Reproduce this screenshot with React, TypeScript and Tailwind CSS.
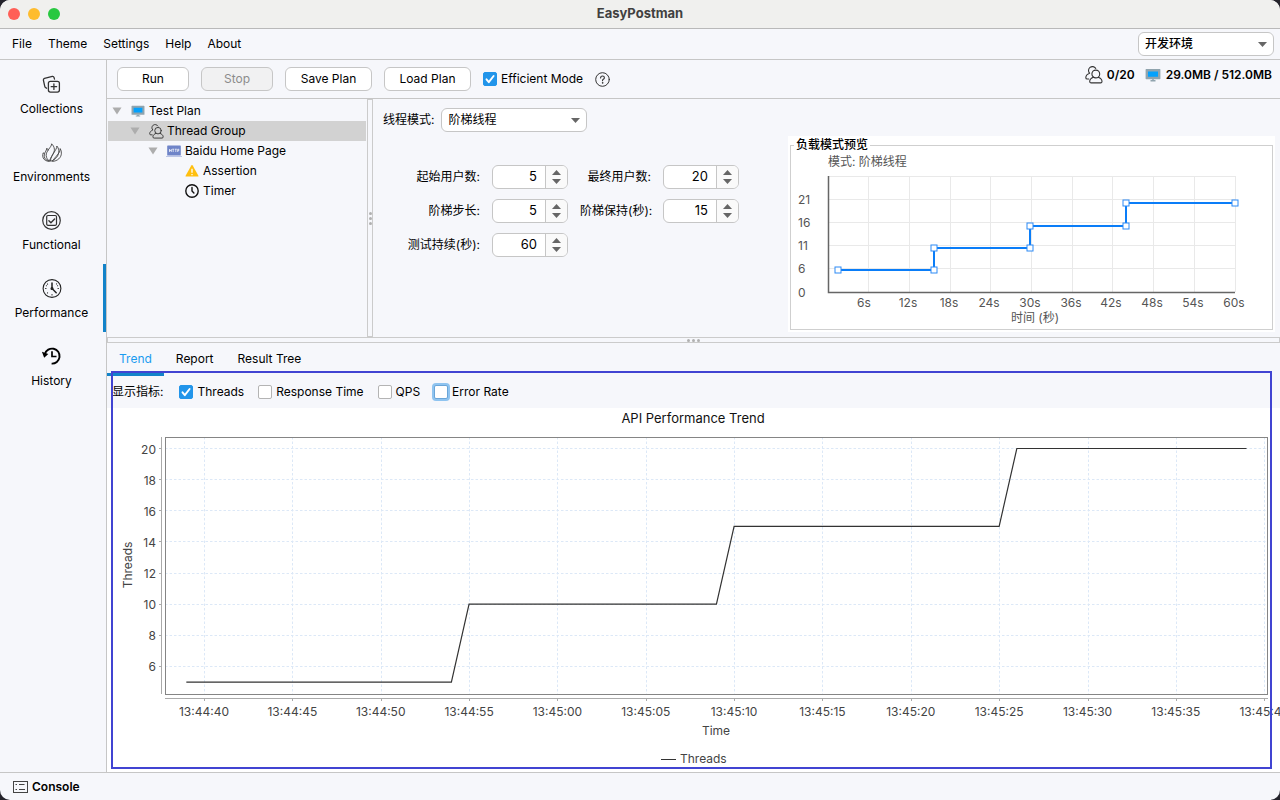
import { useState } from "react";
import type { ReactNode } from "react";
import clsx from "clsx";

const CollectionsIcon = () => (
  <svg width="20" height="20" viewBox="0 0 20 20" fill="none" stroke="#333" strokeWidth="1.3" strokeLinecap="round" strokeLinejoin="round">
    <path d="M4.6 13.2 3.4 12.4Q2.9 12 2.7 11.2L1.4 5.1Q1.1 3.7 2.5 3.3L10.3 1.4Q11.6 1.1 12 2.4L12.5 4.1" />
    <rect x="6.4" y="6.3" width="11" height="10.8" rx="2" />
    <path d="M11.9 9v5.4M9.2 11.7h5.4" />
  </svg>
);

const EnvironmentsIcon = () => (
  <svg width="20" height="20" viewBox="0 0 20 20" fill="none" stroke="#444" strokeWidth="0.9" strokeLinejoin="round">
    <path d="M9.6.8C9.800 4 3.800 7.800 4.200 12.600 4.400 15 5.600 16.800 7.400 18.200 8.200 14.500 12.800 10 12.400 6.200 12.200 4 11 2 9.600.8Z" />
    <path d="M14.800 3C15.200 7 8.800 11.600 8.400 18.200 13.200 17.400 17.200 12.400 16.800 7.600 16.600 5.600 15.800 4 14.800 3Z" />
    <path d="M18.200 5.600C18.400 10 13 14 10.200 18.400 15.400 18.200 19.400 14.600 19.400 10.200 19.400 8.400 19 6.800 18.200 5.600Z" />
    <path d="M4.800 5.200C4.800 7.600 1.800 9.800 2.200 13.200 2.600 16 4.600 17.800 7.400 18.200M4.800 5.200Q5.800 6 6.200 7.600" />
    <path d="M1.200 9.800C.4 12 .4 14.600 2.200 16.400 3.600 17.800 5.400 18.200 7.400 18.200M1.200 9.800Q2 10.200 2.500 11" />
  </svg>
);

const FunctionalIcon = () => (
  <svg width="20" height="20" viewBox="0 0 20 20" fill="none" stroke="#333" strokeWidth="1.2" strokeLinecap="round" strokeLinejoin="round">
    <circle cx="9.500" cy="9.500" r="8.800" />
    <rect x="4.700" y="4.500" width="9.800" height="9.800" rx="1.200" />
    <path d="m6.900 9.800 2 2 3.700-3.700" strokeWidth="1.400" />
  </svg>
);

const PerformanceIcon = () => (
  <svg width="20" height="20" viewBox="0 0 20 20" fill="none" stroke="#222" strokeWidth="1.100" strokeLinecap="round">
    <circle cx="10" cy="9.500" r="8.900" />
    <path d="M10 3.900V9.500l4.200 4.200" strokeWidth="1.500" />
    <circle cx="10" cy="9.500" r="1" fill="#222" />
    <path d="M3.600 9.500h.4M16 9.500h.4M10 15.500v.4M5.500 5l.1.100M14.500 5l.1-.1M5.500 14l.1-.1M4.400 6.700h.1M15.500 6.700h.1" />
  </svg>
);

const HistoryIcon = () => (
  <svg width="20" height="20" viewBox="0 0 20 20" fill="none" stroke="#000" strokeWidth="1.900">
    <path d="M2.900 7A7.500 7.500 0 1 1 9.600 16.600" />
    <path d="M10 4.200v5.300h4.500" strokeWidth="1.700" />
    <path d="M-.2 4.600 6.300 6.900 2.200 10.700Z" fill="#000" stroke="none" />
  </svg>
);

const MonitorIcon = ({ size }: { size: number }) => (
  <svg width={size} height={size} viewBox="0 0 16 16">
    <path d="M1.200 2h13.600q.6 0 .6.600v9q0 .6-.6.600H1.200q-.6 0-.6-.6v-9q0-.6.600-.6Z" fill="#90a4ae" />
    <path d="M3 4.400h10v5.400H3z" fill="#03a1fd" />
    <path d="M7 12.200h2v1H7zM5.500 13h5v1.400h-5z" fill="#90a4ae" />
  </svg>
);

const UsersIcon = ({ size }: { size: number }) => (
  <svg width={size} height={size} viewBox="0 0 18 18" fill="none" stroke="#333" strokeWidth="1.100" strokeLinecap="round" strokeLinejoin="round">
    <circle cx="10.800" cy="8" r="3.900" />
    <path d="M8.400 11.200C6.200 12 4.700 13.500 4.700 15.400Q4.700 16.900 6.200 16.900H15.600Q17 16.900 17 15.400C17 13.500 15.400 12 13.200 11.200" />
    <path d="M10.700 2.400A3.900 3.900 0 1 0 4.600 7.200C2.400 8 .8 9.800 .8 11.700Q.8 13 2.200 13H3.800" />
  </svg>
);

const HttpIcon = () => (
  <svg width="16" height="14" viewBox="0 0 16 14">
    <rect x="1.200" y="1.500" width="13.600" height="10" rx=".6" fill="#6f84c8" />
    <path d="M0 12h16v.8H0z" fill="#a9b5e0" />
    <path d="M3.500 5v3M5.300 5v3M3.500 6.500h1.800M6.200 5.200h2M7.200 5.200V8M8.800 5.200h2M9.800 5.200V8M11.700 8V5.200h1.100v1.500h-1.100" fill="none" stroke="#fff" strokeWidth=".7" />
  </svg>
);

const WarningIcon = () => (
  <svg width="14" height="14" viewBox="0 0 14 14">
    <path d="M6.300 1.500q.7-1 1.400 0l5.700 10.200q.4.900-.6.900H1.200q-1 0-.6-.9Z" fill="#ffbf0f" />
    <path d="M7 4.800v4M7 9.900v1.400" stroke="#fff" strokeWidth="1.300" />
  </svg>
);

const TimerIcon = () => (
  <svg width="14" height="14" viewBox="0 0 14 14" fill="none" stroke="#111" strokeWidth="1.400" strokeLinecap="round">
    <circle cx="7" cy="7" r="6.200" />
    <path d="M7 3.500V7l1.900 1.900" />
  </svg>
);

const ConsoleIcon = () => (
  <svg width="16" height="14" viewBox="0 0 16 14" fill="none" stroke="#444" strokeWidth="1">
    <rect x="1.500" y="1.500" width="14" height="11" />
    <path d="M3.500 4.500h1.500M3.500 9.500h1.500M7 4.500h5.500M7 9.500h6" strokeWidth="1.200" />
  </svg>
);

const navItems = [
  { label: "Collections", icon: <CollectionsIcon /> },
  { label: "Environments", icon: <EnvironmentsIcon /> },
  { label: "Functional", icon: <FunctionalIcon /> },
  { label: "Performance", icon: <PerformanceIcon /> },
  { label: "History", icon: <HistoryIcon /> },
];

const treeRows = [
  { label: "Test Plan", icon: <MonitorIcon size={14} />, indent: "pl-1", open: true },
  { label: "Thread Group", icon: <UsersIcon size={15} />, indent: "pl-[22px]", open: true, selected: true },
  { label: "Baidu Home Page", icon: <HttpIcon />, indent: "pl-[40px]", open: true },
  { label: "Assertion", icon: <WarningIcon />, indent: "pl-[58px]" },
  { label: "Timer", icon: <TimerIcon />, indent: "pl-[58px]" },
];

const PushButton = ({ children, wide, disabled }: { children: ReactNode; wide?: boolean; disabled?: boolean }) => (
  <button
    type="button"
    disabled={disabled}
    className={clsx(
      "h-6 rounded-md border border-[#c6c6c6] text-center",
      wide ? "w-[87px]" : "w-[72px]",
      disabled ? "bg-[#f1f1f2] text-[#8c8c8c]" : "bg-white"
    )}
  >
    {children}
  </button>
);

interface CheckProps {
  label: string;
  defaultChecked?: boolean;
  focused?: boolean;
}

const Check = ({ label, defaultChecked, focused }: CheckProps) => (
  <label className="flex items-center gap-1 whitespace-nowrap">
    <span className="relative flex size-[14px]">
      <input
        type="checkbox"
        defaultChecked={defaultChecked}
        className={clsx(
          "peer size-[14px] appearance-none rounded-[2px] border bg-white checked:border-[#2295ea] checked:bg-[#2295ea]",
          focused ? "border-[#6aa5d8] ring-2 ring-[#8fc4f0]" : "border-[#b4b4b4]"
        )}
      />
      <svg className="pointer-events-none absolute inset-0 hidden peer-checked:block" viewBox="0 0 14 14" fill="none" stroke="#fff" strokeWidth="1.900" strokeLinecap="round" strokeLinejoin="round">
        <path d="m3.500 7.300 2.300 2.900 4.800-6.200" />
      </svg>
    </span>
    {label}
  </label>
);

const Combo = ({ id, value, className }: { id: string; value: string; className: string }) => (
  <span className={clsx("relative block h-6", className)}>
    <select id={id} aria-label={value} className="h-6 w-full appearance-none rounded-md border border-[#c6c6c6] bg-white pl-1.5 pr-6">
      <option>{value}</option>
    </select>
    <svg className="pointer-events-none absolute right-[7px] top-[10px]" width="9" height="5" viewBox="0 0 9 5">
      <path d="M0 0h9L4.500 5z" fill="#666" />
    </svg>
  </span>
);

const Spinner = ({ id, value }: { id: string; value: number }) => (
  <span className="flex h-6 w-[76px] overflow-hidden rounded-md border border-[#c6c6c6] bg-white">
    <input id={id} defaultValue={value} className="w-[52px] pr-2 text-right text-[13px] outline-none" />
    <span className="flex flex-1 flex-col items-center justify-center gap-1 border-l border-[#c6c6c6] bg-[#fafafa]">
      <button type="button" aria-label="Increase">
        <svg width="9" height="5" viewBox="0 0 9 5" className="block"><path d="M0 5h9L4.500 0z" fill="#666" /></svg>
      </button>
      <button type="button" aria-label="Decrease">
        <svg width="9" height="5" viewBox="0 0 9 5" className="block"><path d="M0 0h9L4.500 5z" fill="#666" /></svg>
      </button>
    </span>
  </span>
);

const Field = ({ id, label, value }: { id: string; label: string; value: number }) => (
  <>
    <label htmlFor={id} className="text-right">{label}</label>
    <Spinner id={id} value={value} />
  </>
);

const previewX = [40, 81, 122, 162, 203, 244, 284, 325, 366, 407];
const previewPoints = [
  [10, 94], [106, 94], [106, 72], [202, 72], [202, 50], [298, 50], [298, 27], [407, 27],
];

const LoadPreview = () => (
  <svg viewBox="-37 -22 481 172" className="block w-full" fontSize="12" fill="#555">
    <text x="0" y="-10">模式: 阶梯线程</text>
    <g stroke="#e9e9e9">
      {previewX.map((x) => <path key={x} d={`M${x + 0.5} 0V116`} />)}
      {[0, 23, 46, 69, 92].map((y) => <path key={y} d={`M0 ${y + 0.5}H407`} />)}
    </g>
    <path d="M.5 0V116.500H407" fill="none" stroke="#666" strokeWidth="1.500" />
    {[21, 16, 11, 6, 0].map((n, i) => (
      <text key={n} x="-30" y={28 + i * 23 + (n === 0 ? 1 : 0)}>{n}</text>
    ))}
    {previewX.map((x, i) => (
      <text key={x} x={i === 0 ? x - 4 : x - 1} y="131" textAnchor="middle">{`${(i + 1) * 6}s`}</text>
    ))}
    <text x="207" y="146" textAnchor="middle">时间 (秒)</text>
    <polyline points={previewPoints.map((p) => p.join(",")).join(" ")} fill="none" stroke="#0a7df8" strokeWidth="2" />
    {previewPoints.map(([x, y]) => (
      <rect key={`${x}-${y}`} x={x - 3} y={y - 3} width="6" height="6" fill="#fff" stroke="#2c8af5" />
    ))}
  </svg>
);

const trend = [
  [-1, 5], [14, 5], [15, 10], [29, 10], [30, 15], [45, 15], [46, 20], [59, 20],
];
const timeTicks = [
  "13:44:40", "13:44:45", "13:44:50", "13:44:55", "13:45:00", "13:45:05", "13:45:10",
  "13:45:15", "13:45:20", "13:45:25", "13:45:30", "13:45:35", "13:45:40",
];
const threadTicks = [20, 18, 16, 14, 12, 10, 8, 6];

const tx = (seconds: number) => 97 + seconds * 17.67;
const ty = (threads: number) => 40.5 + (20 - threads) * 15.57;

const TrendChart = () => (
  <svg viewBox="0 0 1173 364" className="block w-full" fontSize="12" fill="#444">
    <text x="586" y="15" textAnchor="middle" fontSize="13" fill="#111">API Performance Trend</text>
    <g stroke="#dce8f7" strokeDasharray="2.500 2">
      {timeTicks.map((t, i) => <path key={t} d={`M${Math.round(tx(i * 5)) + 0.5} 29V286`} />)}
      {threadTicks.map((n) => <path key={n} d={`M58 ${Math.floor(ty(n)) + 0.5}H1161`} />)}
    </g>
    <g stroke="#aaa">
      <path d="M54.500 29V286M58 290.500H1161" />
      {timeTicks.map((t, i) => <path key={t} d={`M${Math.round(tx(i * 5)) + 0.5} 290V293`} />)}
      {threadTicks.map((n) => <path key={n} d={`M52 ${Math.floor(ty(n)) + 0.5}h2`} />)}
    </g>
    <rect x="58.500" y="29.500" width="1102" height="257" fill="none" stroke="#858585" />
    {threadTicks.map((n) => (
      <text key={n} x="49" y={ty(n) + 5} textAnchor="end">{n}</text>
    ))}
    {timeTicks.map((t, i) => (
      <text key={t} x={tx(i * 5)} y="308" textAnchor="middle">{t}</text>
    ))}
    <text x="609" y="327" textAnchor="middle">Time</text>
    <text transform="translate(25 157) rotate(-90)" textAnchor="middle">Threads</text>
    <polyline points={trend.map(([s, n]) => `${tx(s)},${ty(n)}`).join(" ")} fill="none" stroke="#333" strokeWidth="1.200" />
    <path d="M554 351.500h15" stroke="#333" />
    <text x="573" y="355">Threads</text>
  </svg>
);

const tabs = ["Trend", "Report", "Result Tree"];

const App = () => {
  const [activeNav, setActiveNav] = useState("Performance");
  const [activeTab, setActiveTab] = useState("Trend");

  return (
    <div className="h-screen bg-[#24232b]">
      <div className="flex h-full flex-col overflow-hidden rounded-[10px] bg-[#f6f7fb] font-[Inter,'Noto_Sans_CJK_SC',sans-serif] text-xs text-black">
        <header className="relative flex h-[29px] shrink-0 items-center justify-center border-b border-[#b9b9b9] bg-[#f0f0ee]">
          <div className="absolute left-2 flex gap-2">
            <span className="size-3 rounded-full bg-[#ff5f57]" />
            <span className="size-3 rounded-full bg-[#febc2e]" />
            <span className="size-3 rounded-full bg-[#28c840]" />
          </div>
          <h1 className="text-[13px] font-bold text-[#404040]">EasyPostman</h1>
        </header>

        <nav className="flex h-[31px] shrink-0 items-center justify-between border-b border-[#c6c6c6] pl-3 pr-1.5">
          <div className="flex gap-4">
            {["File", "Theme", "Settings", "Help", "About"].map((m) => (
              <button key={m} type="button">{m}</button>
            ))}
          </div>
          <Combo id="environment" value="开发环境" className="w-[136px] font-medium" />
        </nav>

        <div className="flex min-h-0 flex-1">
          <aside className="w-[107px] shrink-0 border-r border-[#c6c6c6]">
            {navItems.map((item) => (
              <button
                key={item.label}
                type="button"
                onClick={() => setActiveNav(item.label)}
                className={clsx(
                  "flex h-[68px] w-full flex-col items-center gap-1 border-r-[3px] pt-[15px]",
                  activeNav === item.label ? "border-[#1283c9]" : "border-transparent"
                )}
              >
                {item.icon}
                <span className="leading-5">{item.label}</span>
              </button>
            ))}
          </aside>

          <main className="flex min-w-0 flex-1 flex-col">
            <div className="flex h-[39px] shrink-0 items-center justify-between border-b border-[#c6c6c6] pl-2.5 pr-2">
              <div className="flex items-center gap-3">
                <PushButton>Run</PushButton>
                <PushButton disabled>Stop</PushButton>
                <PushButton wide>Save Plan</PushButton>
                <PushButton wide>Load Plan</PushButton>
                <Check label="Efficient Mode" defaultChecked />
                <button type="button" aria-label="Help">
                  <svg width="15" height="15" viewBox="0 0 15 15" fill="none" stroke="#333" strokeLinecap="round">
                    <circle cx="7.500" cy="7.500" r="6.800" />
                    <path d="M5.600 6q0-2 1.900-2t1.900 1.700q0 1-1.100 1.600-.8.500-.8 1.500" strokeWidth="1.100" />
                    <circle cx="7.500" cy="10.900" r=".3" fill="#333" />
                  </svg>
                </button>
              </div>
              <div className="flex items-center pb-2 font-semibold">
                <UsersIcon size={18} />
                <span className="ml-1">0/20</span>
                <span className="ml-2.5 mr-[5px]"><MonitorIcon size={16} /></span>
                <span>29.0MB / 512.0MB</span>
              </div>
            </div>

            <div className="flex h-[238px] shrink-0">
              <ul className="w-[260px] shrink-0 px-px pt-0.5">
                {treeRows.map((row) => (
                  <li
                    key={row.label}
                    className={clsx("flex h-5 items-center", row.indent, row.selected && "bg-[#d2d2d2]")}
                  >
                    <svg width="10" height="8" viewBox="0 0 10 8" className="mr-2">
                      {row.open && <path d="M.5.500h9L5 7.500z" fill="#adadad" />}
                    </svg>
                    <span className="mr-[3px] flex w-4 justify-center">{row.icon}</span>
                    {row.label}
                  </li>
                ))}
              </ul>
              <div className="flex w-1.5 shrink-0 flex-col items-center justify-center gap-0.5 border border-[#cbcbcb]">
                <i className="size-[3px] rounded-full bg-[#b0b0b0]" />
                <i className="size-[3px] rounded-full bg-[#b0b0b0]" />
                <i className="size-[3px] rounded-full bg-[#b0b0b0]" />
              </div>

              <section className="flex min-w-0 flex-1 justify-between">
                <div className="pl-2.5 pt-[9px]">
                  <div className="flex items-center gap-[7px]">
                    <label htmlFor="mode">线程模式:</label>
                    <Combo id="mode" value="阶梯线程" className="w-[146px]" />
                  </div>
                  <div className="mt-[33px] grid grid-cols-[97px_76px_71px_76px] items-center gap-x-3 gap-y-2.5 whitespace-nowrap">
                    <Field id="start" label="起始用户数:" value={5} />
                    <Field id="end" label="最终用户数:" value={20} />
                    <Field id="step" label="阶梯步长:" value={5} />
                    <Field id="hold" label="阶梯保持(秒):" value={15} />
                    <Field id="duration" label="测试持续(秒):" value={60} />
                  </div>
                </div>
                <div className="mr-[5px] mt-[37px] h-[196px] w-[487px] bg-white px-0.5">
                  <fieldset className="h-[194px] border border-[#cfcfcf]">
                    <legend className="ml-[3px] px-0.5 font-medium leading-[18px]">负载模式预览</legend>
                    <LoadPreview />
                  </fieldset>
                </div>
              </section>
            </div>

            <div className="flex h-1.5 shrink-0 items-center justify-center gap-0.5 border border-[#cbcbcb]">
              <i className="size-[3px] rounded-full bg-[#b0b0b0]" />
              <i className="size-[3px] rounded-full bg-[#b0b0b0]" />
              <i className="size-[3px] rounded-full bg-[#b0b0b0]" />
            </div>

            <section className="relative flex min-h-0 flex-1 flex-col">
              <div role="tablist" className="flex h-[33px] shrink-0">
                {tabs.map((tab) => (
                  <button
                    key={tab}
                    type="button"
                    role="tab"
                    aria-selected={activeTab === tab}
                    onClick={() => setActiveTab(tab)}
                    className={clsx(
                      "border-b-[3px] px-3 pt-px",
                      activeTab === tab ? "border-[#1283c9] text-[#1a9bf0]" : "border-transparent"
                    )}
                  >
                    {tab}
                  </button>
                ))}
              </div>
              <div className="flex h-8 shrink-0 items-center gap-3.5 pl-[5px]">
                <span className="mr-0.5">显示指标:</span>
                <Check label="Threads" defaultChecked />
                <Check label="Response Time" />
                <Check label="QPS" />
                <Check label="Error Rate" focused />
              </div>
              <div className="min-h-0 flex-1 overflow-hidden bg-white">
                <TrendChart />
              </div>
              {/* highlight frame around the trend panel */}
              <div className="pointer-events-none absolute bottom-[3px] left-1 right-2 top-7 border-2 border-[#4144d2]" />
            </section>
          </main>
        </div>

        <footer className="flex h-7 shrink-0 items-center border-t border-[#c6c6c6] px-3">
          <button type="button" className="flex items-center gap-1 font-semibold">
            <ConsoleIcon />
            Console
          </button>
        </footer>
      </div>
    </div>
  );
};

export default App;
